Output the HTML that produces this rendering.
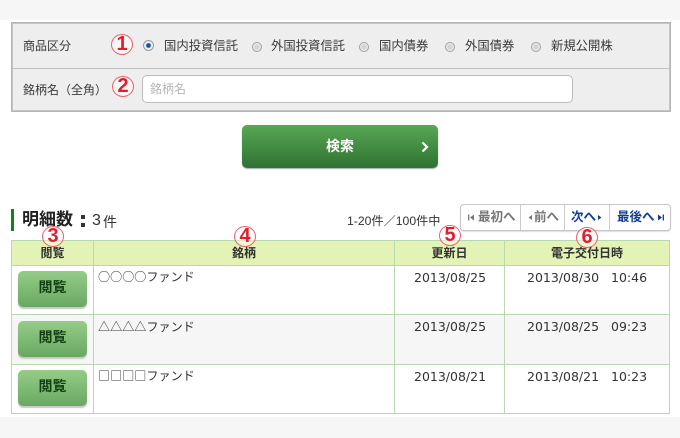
<!DOCTYPE html>
<html lang="ja">
<head>
<meta charset="utf-8">
<style>
html,body{margin:0;padding:0}
body{width:680px;height:438px;position:relative;overflow:hidden;background:#fff;font-family:"Liberation Sans","Noto Sans CJK JP",sans-serif;color:#333}
div,span{position:absolute;box-sizing:border-box;white-space:nowrap}
.t{font-size:12px;line-height:16px;color:#3a3a3a}
.o{font-size:12.33px}
.r{width:10px;height:10px;border-radius:50%;border:1px solid #a0a0a0;background:radial-gradient(circle,#d4d4d4 0 35%,#f2f2f2 70%)}
.n{width:22px;height:21px;border:1px solid #e8606a;border-radius:50%;color:#e01f2d;font-weight:bold;font-size:20px;line-height:19px;text-align:center;background:rgba(255,255,255,.45)}
.th{top:241px;height:24px;line-height:25px;text-align:center;font-size:12px;font-weight:bold;color:#333}
.l{background:#b9d8b0}
.b{left:18px;width:69px;height:36px;border-radius:5px;background:linear-gradient(#95cd88,#69a862);box-shadow:0 2px 1px #c8c8c8;text-align:center;font-weight:bold;font-size:14px;line-height:32px;color:#123f12}
.f{left:98px;font-family:"Noto Sans CJK JP",sans-serif;font-size:12.1px;line-height:18px;color:#333}
.d{font-family:"DejaVu Sans",sans-serif;font-size:12.5px;line-height:16px;color:#333}
.p{top:206px;height:22px;line-height:22px;font-size:12.5px;font-weight:bold}
svg{position:absolute}
</style>
</head>
<body>
<div style="left:0;top:0;width:680px;height:20px;background:#f6f6f6"></div>
<div style="left:0;top:417px;width:680px;height:21px;background:#f6f6f6"></div>

<div style="left:11px;top:22px;width:660px;height:90px;background:#eeeeee;border:1px solid #b4b4b4;box-shadow:inset 0 0 0 1px #c4c4c4"></div>
<div style="left:12px;top:68px;width:658px;height:1px;background:#c2c2c2"></div>

<div class="t" style="left:23px;top:38px">商品区分</div>
<div class="t" style="left:23px;top:82px">銘柄名（全角）</div>
<div class="n" style="left:111px;top:34px">1</div>
<div class="n" style="left:112px;top:76px">2</div>

<div style="left:143px;top:40px;width:11px;height:11px;border-radius:50%;border:1px solid #9a9a9a;background:radial-gradient(circle,#0e5f90 0 30%,#eef 45%,#eee 100%)"></div>
<div class="t o" style="left:164px;top:38px">国内投資信託</div>
<div class="r" style="left:252px;top:42px"></div>
<div class="t o" style="left:271px;top:38px">外国投資信託</div>
<div class="r" style="left:359px;top:42px"></div>
<div class="t o" style="left:379px;top:38px">国内債券</div>
<div class="r" style="left:445px;top:42px"></div>
<div class="t o" style="left:465px;top:38px">外国債券</div>
<div class="r" style="left:531px;top:42px"></div>
<div class="t o" style="left:551px;top:38px">新規公開株</div>

<div style="left:142px;top:75px;width:431px;height:28px;background:#fff;border:1px solid #bcbcbc;border-radius:5px"></div>
<div class="t" style="left:150px;top:81px;color:#b5b5b5">銘柄名</div>

<div style="left:242px;top:125px;width:196px;height:43px;border-radius:5px;background:linear-gradient(#58a854,#2f7232);box-shadow:0 1px 1px #aaa"></div>
<div style="left:242px;top:137px;width:196px;text-align:center;color:#fff;font-weight:bold;font-size:14px;line-height:18px">検索</div>
<svg style="left:419px;top:141px" width="12" height="12" viewBox="0 0 12 12"><path d="M3.5 1.5 8 6 3.5 10.5" fill="none" stroke="#fff" stroke-width="2.2"/></svg>

<div style="left:11px;top:209px;width:3px;height:22px;background:#14801f"></div>
<div style="left:22px;top:209px;font-size:17px;line-height:22px;font-weight:bold;color:#222">明細数</div>
<div style="left:81px;top:215px;width:4px;height:4px;background:#333"></div>
<div style="left:81px;top:223px;width:4px;height:4px;background:#333"></div>
<div style="left:92px;top:210px;font-size:16px;line-height:22px;color:#333">3</div>
<div style="left:103px;top:211px;font-size:14px;line-height:22px;color:#333">件</div>
<div style="left:347px;top:213px;font-size:12.2px;line-height:16px;color:#333">1-20件／100件中</div>

<div style="left:460px;top:204px;width:211px;height:27px;border:1px solid #c6c6c6;border-radius:4px;background:#fff;box-shadow:0 1px 1px #ddd"></div>
<div style="left:520px;top:205px;width:1px;height:25px;background:#ccc"></div>
<div style="left:564px;top:205px;width:1px;height:25px;background:#ccc"></div>
<div style="left:609px;top:205px;width:1px;height:25px;background:#ccc"></div>

<svg style="left:467px;top:213px" width="9" height="9" viewBox="0 0 9 9"><path d="M1 1.5h1.3v6H1zM7 1.5v6L3 4.5z" fill="#777"/></svg>
<div class="p" style="left:478px;color:#777">最初へ</div>
<svg style="left:527px;top:213px" width="6" height="9" viewBox="0 0 6 9"><path d="M5 2v5L1.5 4.5z" fill="#777"/></svg>
<div class="p" style="left:534px;color:#777">前へ</div>
<div class="p" style="left:571px;color:#123f8c">次へ</div>
<svg style="left:597px;top:213px" width="6" height="9" viewBox="0 0 6 9"><path d="M1 2v5l3.5-2.5z" fill="#123f8c"/></svg>
<div class="p" style="left:617px;color:#123f8c">最後へ</div>
<svg style="left:656px;top:213px" width="9" height="9" viewBox="0 0 9 9"><path d="M2 1.5v6l4-3zM6.7 1.5H8v6H6.7z" fill="#123f8c"/></svg>

<div style="left:11px;top:240px;width:659px;height:26px;background:#e3f3b5"></div>
<div style="left:12px;top:315px;width:657px;height:49px;background:#f6f6f6"></div>
<div class="l" style="left:11px;top:240px;width:659px;height:1px"></div>
<div class="l" style="left:11px;top:265px;width:659px;height:1px"></div>
<div class="l" style="left:11px;top:314px;width:659px;height:1px"></div>
<div class="l" style="left:11px;top:364px;width:659px;height:1px"></div>
<div class="l" style="left:11px;top:413px;width:659px;height:1px"></div>
<div class="l" style="left:11px;top:240px;width:1px;height:174px"></div>
<div class="l" style="left:93px;top:240px;width:1px;height:174px"></div>
<div class="l" style="left:394px;top:240px;width:1px;height:174px"></div>
<div class="l" style="left:504px;top:240px;width:1px;height:174px"></div>
<div class="l" style="left:669px;top:240px;width:1px;height:174px"></div>

<div class="n" style="left:42px;top:226px">3</div>
<div class="n" style="left:234px;top:226px">4</div>
<div class="n" style="left:439px;top:225px">5</div>
<div class="n" style="left:576px;top:227px">6</div>

<div class="th" style="left:12px;width:81px">閲覧</div>
<div class="th" style="left:94px;width:300px">銘柄</div>
<div class="th" style="left:395px;width:109px">更新日</div>
<div class="th" style="left:505px;width:164px">電子交付日時</div>

<div class="b" style="top:271px">閲覧</div>
<div class="b" style="top:321px">閲覧</div>
<div class="b" style="top:370px">閲覧</div>

<div class="f" style="top:268px">○○○○ファンド</div>
<div class="f" style="top:318px">△△△△ファンド</div>
<div class="f" style="top:367px">□□□□ファンド</div>

<div class="d" style="left:414px;top:270px">2013/08/25</div>
<div class="d" style="left:414px;top:319px">2013/08/25</div>
<div class="d" style="left:414px;top:369px">2013/08/21</div>
<div class="d" style="left:527px;top:270px">2013/08/30</div>
<div class="d" style="left:611px;top:270px">10:46</div>
<div class="d" style="left:527px;top:319px">2013/08/25</div>
<div class="d" style="left:611px;top:319px">09:23</div>
<div class="d" style="left:527px;top:369px">2013/08/21</div>
<div class="d" style="left:611px;top:369px">10:23</div>
</body>
</html>
